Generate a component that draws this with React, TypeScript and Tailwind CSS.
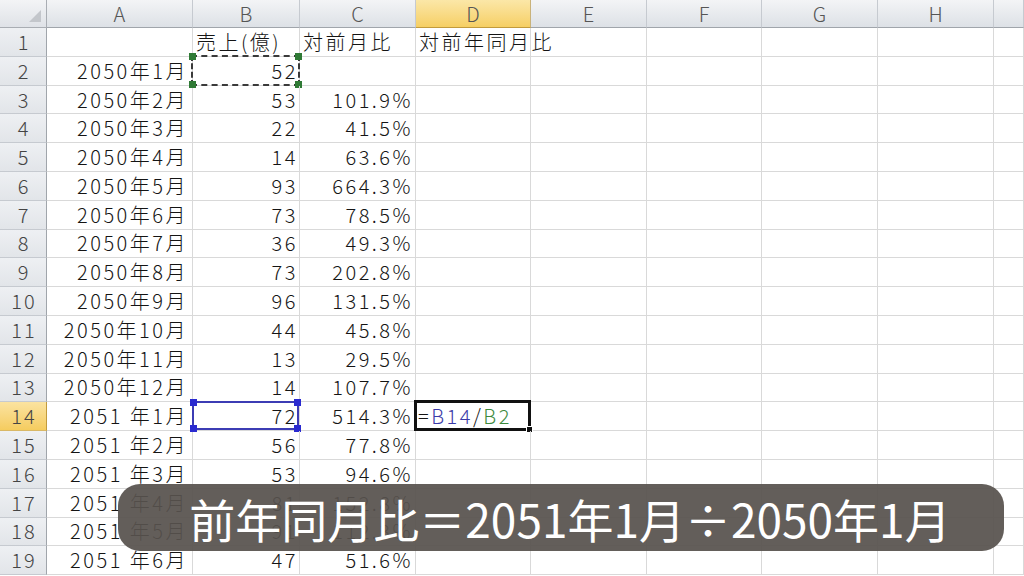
import React from "react";

const COLS = ["A", "B", "C", "D", "E", "F", "G", "H", ""];

type Row = { a: string; b: string; c: string; d?: string };

const rows: Row[] = [
  { a: "", b: "売上(億)", c: "対前月比", d: "対前年同月比" },
  { a: "2050年1月", b: "52", c: "" },
  { a: "2050年2月", b: "53", c: "101.9%" },
  { a: "2050年3月", b: "22", c: "41.5%" },
  { a: "2050年4月", b: "14", c: "63.6%" },
  { a: "2050年5月", b: "93", c: "664.3%" },
  { a: "2050年6月", b: "73", c: "78.5%" },
  { a: "2050年7月", b: "36", c: "49.3%" },
  { a: "2050年8月", b: "73", c: "202.8%" },
  { a: "2050年9月", b: "96", c: "131.5%" },
  { a: "2050年10月", b: "44", c: "45.8%" },
  { a: "2050年11月", b: "13", c: "29.5%" },
  { a: "2050年12月", b: "14", c: "107.7%" },
  { a: "2051 年1月", b: "72", c: "514.3%" },
  { a: "2051 年2月", b: "56", c: "77.8%" },
  { a: "2051 年3月", b: "53", c: "94.6%" },
  { a: "2051 年4月", b: "81", c: "152.8%" },
  { a: "2051 年5月", b: "91", c: "112.3%" },
  { a: "2051 年6月", b: "47", c: "51.6%" },
];

const font = { fontFamily: "'Noto Sans CJK JP', 'Liberation Sans', sans-serif" };

function Handle({ pos, color }: { pos: string; color: string }) {
  return <span className={`absolute w-[7px] h-[7px] ${pos} ${color}`} />;
}

const cellText = "text-[20px] font-light tracking-[2.5px] text-[#141414]";

export default function App() {
  return (
    <div className="relative w-[1024px] h-[576px] overflow-hidden bg-white" style={font}>
      <div className="grid grid-cols-[47px_146px_107px_116px_115px_116px_115px_116px_116px_30px] grid-rows-[28px_repeat(19,28.8px)]">
        {/* corner */}
        <div className="relative bg-gradient-to-b from-[#f3f4f6] to-[#dfe2e7] border-r border-b border-[#a9adb3]">
          <div className="absolute right-[5px] bottom-[5px] w-0 h-0 border-l-[12px] border-l-transparent border-b-[12px] border-b-[#c3c6cb]" />
        </div>
        {COLS.map((c, i) => (
          <div
            key={c + i}
            className={
              "flex items-center justify-center text-[20px] font-light border-b border-r " +
              (c === "D"
                ? "bg-gradient-to-b from-[#fbe7a7] to-[#f6cf63] text-[#555] border-b-[#c29b3c] border-r-[#c9b27a]"
                : "bg-gradient-to-b from-[#f3f4f6] to-[#dde1e6] text-[#555] border-b-[#a0a5ab] border-r-[#c6cad0]")
            }
          >
            {c}
          </div>
        ))}
        {rows.map((r, ri) => {
          const n = ri + 1;
          return (
            <React.Fragment key={n}>
              <div
                className={
                  "flex items-center justify-center text-[20px] font-light tracking-[2px] pl-[2px] border-r border-b " +
                  (n === 14
                    ? "bg-gradient-to-b from-[#fbe3a0] to-[#f5cc5e] text-[#444] border-r-[#c29b3c] border-b-[#d9b866]"
                    : "bg-gradient-to-b from-[#eef0f3] to-[#e2e5e9] text-[#444] border-r-[#a0a5ab] border-b-[#c6cad0]")
                }
              >
                {n}
              </div>
              {/* A */}
              <div className={"flex items-center justify-end pr-[4px] border-r border-b border-[#d9d9d9] whitespace-nowrap " + cellText}>
                {r.a}
              </div>
              {/* B */}
              <div
                className={
                  "relative flex items-center border-r border-b border-[#d9d9d9] whitespace-nowrap " +
                  cellText +
                  (n === 1 ? " justify-start pl-[3px]" : " justify-end pr-[1px]")
                }
              >
                {r.b}
                {n === 2 && (
                  <div className="absolute -left-[2px] -top-[2px] -right-[1px] -bottom-[1px] border-2 border-dashed border-[#3a3a3a]">
                    <Handle pos="-left-[4px] -top-[4px]" color="bg-[#2f7a35]" />
                    <Handle pos="-right-[4px] -top-[4px]" color="bg-[#2f7a35]" />
                    <Handle pos="-left-[4px] -bottom-[4px]" color="bg-[#2f7a35]" />
                    <Handle pos="-right-[4px] -bottom-[4px]" color="bg-[#2f7a35]" />
                  </div>
                )}
                {n === 14 && (
                  <div className="absolute -left-[1px] -top-[1px] right-0 bottom-0 border-2 border-[#3c3cb4]">
                    <Handle pos="-left-[4px] -top-[4px]" color="bg-[#2a2ad0]" />
                    <Handle pos="-right-[4px] -top-[4px]" color="bg-[#2a2ad0]" />
                    <Handle pos="-left-[4px] -bottom-[4px]" color="bg-[#2a2ad0]" />
                    <Handle pos="-right-[4px] -bottom-[4px]" color="bg-[#2a2ad0]" />
                  </div>
                )}
              </div>
              {/* C */}
              <div
                className={
                  "flex items-center border-r border-b border-[#d9d9d9] whitespace-nowrap " +
                  cellText +
                  (n === 1 ? " justify-start pl-[3px]" : " justify-end pr-[2px]")
                }
              >
                {r.c}
              </div>
              {/* D */}
              <div className={"relative flex items-center justify-start pl-[3px] border-r border-b border-[#d9d9d9] whitespace-nowrap " + cellText}>
                {r.d ?? ""}
                {n === 14 && (
                  <div className="absolute -left-[2px] -top-[2px] -right-[1px] -bottom-[1px] border-[3px] border-[#111] flex items-center pl-[1px]">
                    <span>=</span>
                    <span className="text-[#3a3aa8]">B14</span>
                    <span>/</span>
                    <span className="text-[#3d8a3d]">B2</span>
                    <span className="absolute -right-[5px] -bottom-[5px] w-[7px] h-[7px] bg-[#111] border border-white" />
                  </div>
                )}
              </div>
              {[0, 1, 2, 3, 4].map((k) => (
                <div key={k} className="border-r border-b border-[#d9d9d9]" />
              ))}
            </React.Fragment>
          );
        })}
      </div>

      {/* caption overlay */}
      <div className="absolute left-[118px] top-[484px] w-[886px] h-[67px] rounded-[22px] bg-[#57524e]/[0.93] flex items-center justify-center pl-[18px]">
        <span className="text-white text-[46px] leading-none whitespace-nowrap" style={{ fontFamily: "'Noto Sans CJK JP', sans-serif" }}>
          前年同月比＝2051年1月÷2050年1月
        </span>
      </div>
    </div>
  );
}
